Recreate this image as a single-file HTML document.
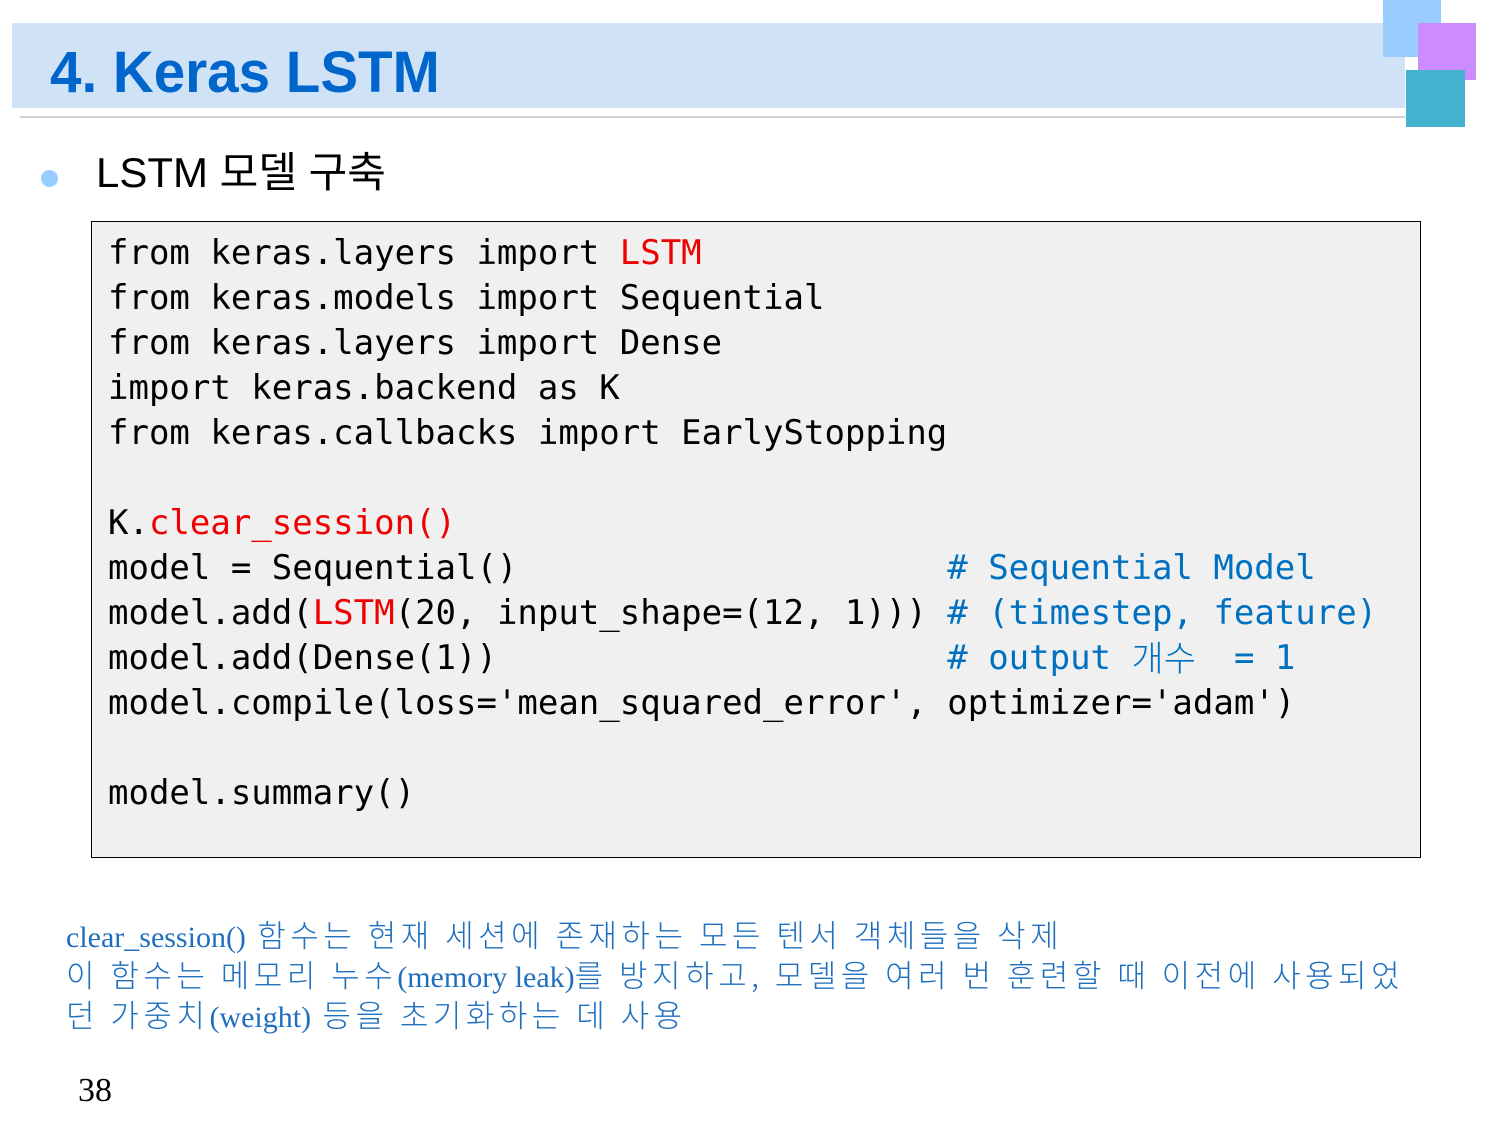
<!DOCTYPE html>
<html><head><meta charset="utf-8"><style>
body{margin:0;width:1500px;height:1125px;background:#fff;position:relative;overflow:hidden;font-family:"Liberation Sans","Noto Sans CJK KR",sans-serif}
.abs{position:absolute}
.band{left:12px;top:23px;width:1393px;height:85px;background:#cfe2f6}
.title{left:50px;top:38px;font-size:58px;font-weight:bold;color:#0066cc;line-height:70px;transform:scaleX(0.975);transform-origin:0 0;white-space:nowrap}
.line{left:20px;top:116px;width:1385px;height:2px;background:#d0d0d0}
.sq1{left:1383px;top:0;width:58px;height:57px;background:#99ccff}
.sq2{left:1418px;top:23px;width:58px;height:57px;background:#cc8cff}
.sq3{left:1406px;top:70px;width:59px;height:57px;background:#45b3d0}
.dot{left:41px;top:170px;width:17px;height:17px;border-radius:50%;background:#99ccff}
.sub{left:96px;top:146px;font-size:42px;line-height:54px;color:#000;font-weight:normal}
.box{left:91px;top:221px;width:1328px;height:635px;background:#f0f0f0;border:1.5px solid #000}
pre{position:absolute;left:108px;top:231px;margin:0;font-family:"DejaVu Sans Mono","Liberation Mono","Noto Sans CJK KR",monospace;font-size:34px;line-height:45px;color:#000}
.r{color:#ee0000}.b{color:#0070c0}
.k{display:inline-block;width:82px;height:30px;line-height:30px;vertical-align:-2px;font-family:"Noto Sans CJK KR",sans-serif;font-weight:300;font-size:35px;overflow:visible}
.note{left:66px;top:914px;color:#1f6fbf;font-family:"Liberation Serif","Noto Sans CJK KR",serif;white-space:nowrap}
.note div{height:40px;line-height:40px;font-size:30px}
.note .h{font-family:"Noto Sans CJK KR",sans-serif;font-weight:300;font-size:31px;letter-spacing:4.5px}
.pg{left:78px;top:1072px;font-family:"Liberation Serif",serif;font-size:34px}
</style></head><body>
<div class="abs band"></div>
<div class="abs line"></div>
<div class="abs sq1"></div><div class="abs sq2"></div><div class="abs sq3"></div>
<div class="abs title">4. Keras LSTM</div>
<div class="abs dot"></div>
<div class="abs sub">LSTM 모델 구축</div>
<div class="abs box"></div>
<pre>from keras.layers import <span class="r">LSTM</span>
from keras.models import Sequential
from keras.layers import Dense
import keras.backend as K
from keras.callbacks import EarlyStopping

K.<span class="r">clear_session()</span>
model = Sequential()                     <span class="b"># Sequential Model</span>
model.add(<span class="r">LSTM</span>(20, input_shape=(12, 1))) <span class="b"># (timestep, feature)</span>
model.add(Dense(1))                      <span class="b"># output <span class="k">개수</span> = 1</span>
model.compile(loss='mean_squared_error', optimizer='adam')

model.summary()</pre>
<div class="abs note"><div>clear_session()<span class="h"> 함수는 현재 세션에 존재하는 모든 텐서 객체들을 삭제</span></div><div><span class="h">이 함수는 메모리 누수</span>(memory leak)<span class="h">를 방지하고, 모델을 여러 번 훈련할 때 이전에 사용되었</span></div><div><span class="h">던 가중치</span>(weight)<span class="h"> 등을 초기화하는 데 사용</span></div></div>
<div class="abs pg">38</div>
</body></html>
